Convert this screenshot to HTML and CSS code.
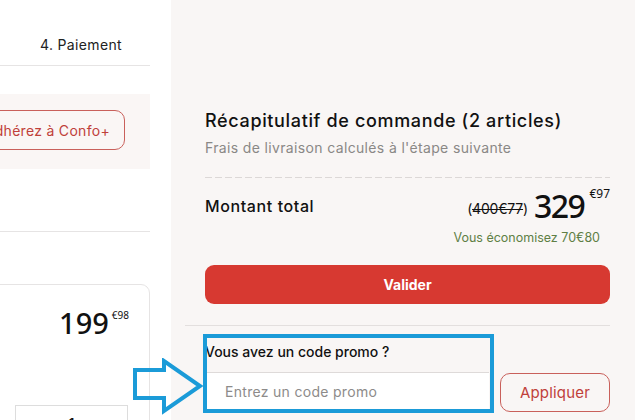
FILE: index.html
```html
<!DOCTYPE html>
<html lang="fr">
<head>
<meta charset="utf-8">
<title>Récapitulatif de commande</title>
<link rel="stylesheet" href="styles.css">
</head>
<body>
<div class="page">
  <section class="left">
    <div class="left-inner">
      <div class="steps"><span class="step">4. Paiement</span></div>
      <div class="promo-club">
        <button class="btn-outline club-btn">Adhérez à Confo+</button>
      </div>
      <div class="sep"></div>
      <div class="card">
        <div class="card-price"><span class="int">199</span><sup class="cents">€98</sup></div>
        <div class="qty"><span>−</span><span>1</span><span>+</span></div>
      </div>
    </div>
  </section>
  <aside class="right">
    <div class="summary">
      <h2 class="title">Récapitulatif de commande (2 articles)</h2>
      <p class="sub">Frais de livraison calculés à l'étape suivante</p>
      <div class="dash"></div>
      <div class="total-row">
        <span class="total-label">Montant total</span>
        <span class="total-price"><span class="old">(<s>400€77</s>)</span><span class="big">329</span><sup class="sup">€97</sup></span>
      </div>
      <p class="save">Vous économisez 70€80</p>
      <button class="validate">Valider</button>
    </div>
    <div class="divider"></div>
    <div class="promo">
      <p class="promo-label">Vous avez un code promo ?</p>
      <div class="promo-row">
        <input class="promo-input" type="text" placeholder="Entrez un code promo">
        <button class="btn-outline apply">Appliquer</button>
      </div>
    </div>
  </aside>
  <div class="highlight"></div>
  <svg class="arrow" width="80" height="60" viewBox="0 0 80 60">
    <polygon points="4,12 33,12 33,3 69,28 33,53 33,40 4,40" fill="none" stroke="#1b9bd8" stroke-width="4" stroke-linejoin="miter"/>
  </svg>
</div>
</body>
</html>
```
FILE: styles.css
```css
* { box-sizing: border-box; margin: 0; padding: 0; }
html, body { width: 635px; height: 420px; overflow: hidden; }
body { font-family: "Inter", "Open Sans", sans-serif; color: #111; background: #fff; }
.page { position: relative; display: flex; width: 635px; height: 420px; }

.left { width: 171px; flex: none; background: #fff; overflow: hidden; padding-right: 21px; display: flex; justify-content: flex-end; }
.left-inner { width: 500px; flex: none; }
.steps { height: 66px; border-bottom: 1px solid #e6e4e4; display: flex; justify-content: flex-end; padding: 36px 28px 0 0; font-size: 14px; line-height: 18px; color: #222; letter-spacing: 0.35px; }
.promo-club { margin-top: 28px; height: 75px; background: #faf6f5; display: flex; justify-content: flex-end; align-items: center; padding-right: 25px; }
.btn-outline { background: transparent; border: 1px solid #c9605b; color: #c0403a; border-radius: 10px; font-family: inherit; }
.club-btn { height: 40px; padding: 0 14px; font-size: 14px; margin-top: -3px; letter-spacing: 0.3px; }
.sep { margin-top: 62px; border-top: 1px solid #e6e4e4; }
.card { margin-top: 52px; height: 200px; border: 1px solid #e6e4e4; border-radius: 9px; padding: 22px 20px 0 0; display: flex; flex-direction: column; align-items: flex-end; }
.card-price { display: flex; align-items: flex-start; font-family: "Noto Sans", sans-serif; }
.card-price .int { font-size: 29px; line-height: 32px; font-weight: 500; }
.card-price .cents { font-size: 10px; line-height: 12px; margin-left: 3px; margin-top: 2px; }
.qty { margin-top: 66px; margin-right: 1px; width: 113px; height: 34px; border: 1px solid #ddd; display: flex; justify-content: space-between; padding: 8px 14px 0; font-size: 16px; }

.right { flex: 1; background: #f9f6f5; padding: 0 25px 0 14px; }
.summary { padding-left: 20px; }
.title { margin-top: 109px; font-size: 18px; line-height: 24px; font-weight: 500; color: #111; letter-spacing: 0.65px; }
.sub { margin-top: 5px; font-size: 14px; line-height: 20px; color: #8a8886; letter-spacing: 0.35px; }
.dash { margin-top: 19px; height: 1px; background: repeating-linear-gradient(90deg, #dcd8d7 0 7px, transparent 7px 10px); }
.total-row { margin-top: 11px; display: flex; justify-content: space-between; align-items: center; height: 34px; }
.total-label { font-size: 16px; font-weight: 500; letter-spacing: 0.6px; }
.total-price { display: flex; align-items: center; }
.old { font-size: 14px; margin-right: 6px; margin-top: 4px; letter-spacing: -0.2px; }
.big { font-family: "Noto Sans", sans-serif; font-size: 32px; line-height: 34px; font-weight: 500; letter-spacing: -1.5px; }
.sup { font-family: "Noto Sans", sans-serif; font-size: 12px; align-self: flex-start; line-height: 12px; margin-left: 5px; margin-top: -1px; }
.save { margin-top: 7px; text-align: right; padding-right: 10px; font-size: 12.5px; line-height: 16px; color: #5f7f45; }
.validate { margin-top: 19px; width: 100%; height: 39px; border: none; border-radius: 9px; background: #d73931; color: #fff; font-family: inherit; font-size: 14px; font-weight: 700; }
.divider { margin-top: 21px; border-top: 1px solid #e3dfde; }
.promo { padding-left: 20px; }
.promo-label { margin-top: 16px; font-size: 14px; line-height: 20px; font-weight: 500; }
.promo-row { margin-top: 10px; display: flex; align-items: flex-start; }
.promo-input { width: 284px; height: 38px; background: #fff; border: none; border-top: 1px solid #dedad9; padding-left: 20px; font-family: inherit; font-size: 14px; color: #333; outline: none; letter-spacing: 0.3px; }
.promo-input::placeholder { color: #8d8b8a; }
.apply { margin-left: 11px; margin-top: 1px; width: 110px; height: 39px; font-size: 15px; letter-spacing: 0.2px; }

.highlight { position: absolute; left: 203px; top: 334px; width: 291px; height: 79px; border: 4px solid #1b9bd8; }
.arrow { position: absolute; left: 131px; top: 358px; }
```
